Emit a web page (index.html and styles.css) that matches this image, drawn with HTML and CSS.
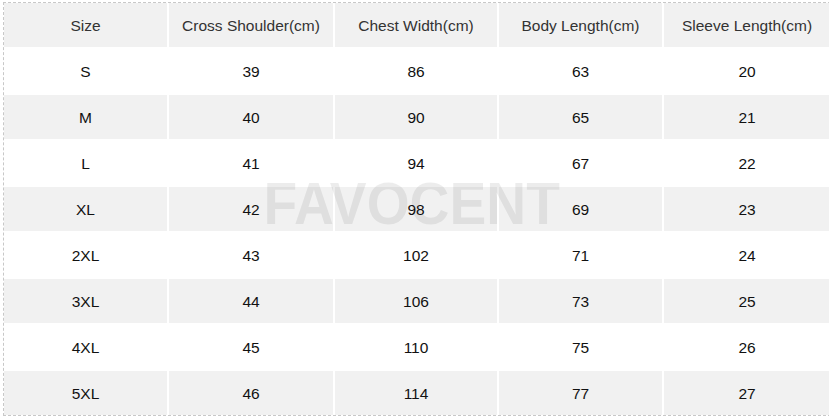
FILE: index.html
```html
<!DOCTYPE html>
<html>
<head>
<meta charset="utf-8">
<link rel="stylesheet" href="styles.css">
</head>
<body>
<div class="frame">
  <div class="table">
    <div class="row head alt"><div>Size</div><div>Cross Shoulder(cm)</div><div>Chest Width(cm)</div><div>Body Length(cm)</div><div>Sleeve Length(cm)</div></div>
    <div class="row"><div>S</div><div>39</div><div>86</div><div>63</div><div>20</div></div>
    <div class="row alt"><div>M</div><div>40</div><div>90</div><div>65</div><div>21</div></div>
    <div class="row"><div>L</div><div>41</div><div>94</div><div>67</div><div>22</div></div>
    <div class="row alt"><div>XL</div><div>42</div><div>98</div><div>69</div><div>23</div></div>
    <div class="row"><div>2XL</div><div>43</div><div>102</div><div>71</div><div>24</div></div>
    <div class="row alt"><div>3XL</div><div>44</div><div>106</div><div>73</div><div>25</div></div>
    <div class="row"><div>4XL</div><div>45</div><div>110</div><div>75</div><div>26</div></div>
    <div class="row alt"><div>5XL</div><div>46</div><div>114</div><div>77</div><div>27</div></div>
  </div>
  <div class="watermark">FAVOCENT</div>
</div>
</body>
</html>
```

FILE: styles.css
```css
html, body {
  margin: 0;
  padding: 0;
  background: #fff;
  overflow: hidden;
}
body {
  width: 829px;
  height: 417px;
  font-family: "Liberation Sans", Arial, sans-serif;
}
.frame {
  position: relative;
  margin: 2px 0 0 3px;
  border: 1px dashed #c8c8c8;
  width: 826px;
}
.table {
  display: flex;
  flex-direction: column;
  gap: 2px;
}
.row {
  display: grid;
  grid-template-columns: 163px 164px 162px 163px 166px;
  column-gap: 2px;
  height: 44px;
}
.row > div {
  display: flex;
  align-items: center;
  justify-content: center;
  padding-top: 1px;
  font-size: 15.5px;
  color: #111;
  background: #fff;
}
.row.alt > div {
  background: #f1f1f1;
}
.row.head > div {
  color: #333;
}
.watermark {
  position: absolute;
  left: 247px;
  top: 166px;
  width: 310px;
  text-align: center;
  font-family: "Liberation Sans", Arial, sans-serif;
  font-weight: bold;
  font-size: 60px;
  line-height: 70px;
  color: rgba(0, 0, 0, 0.075);
  transform: scaleX(0.92);
  pointer-events: none;
}
```
